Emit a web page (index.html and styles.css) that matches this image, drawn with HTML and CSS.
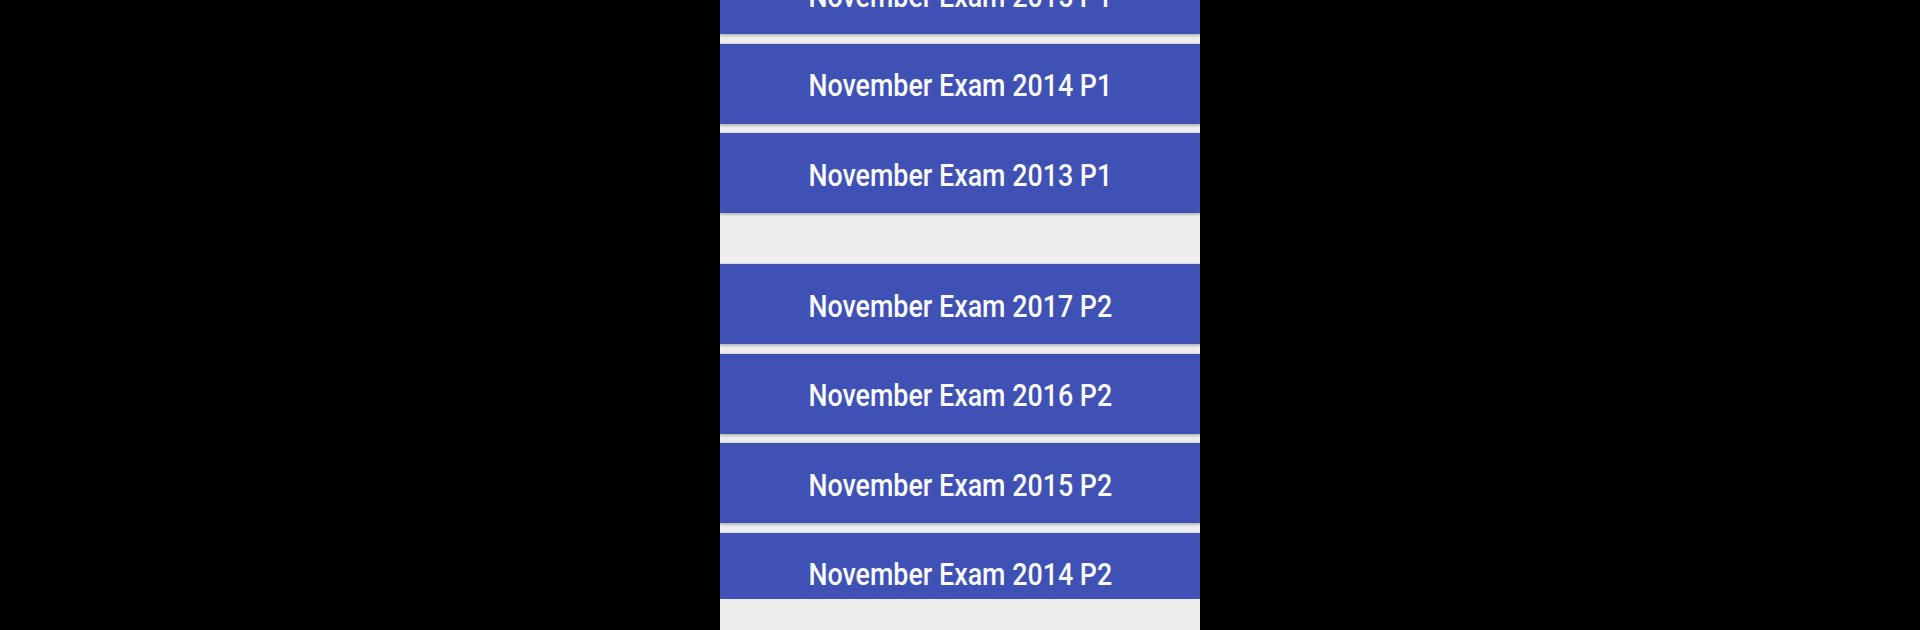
FILE: index.html
```html
<!DOCTYPE html>
<html lang="en">
<head>
    <meta charset="UTF-8">
    <meta name="viewport" content="width=device-width, initial-scale=1.0">
    <title>November Exams</title>
    <link rel="stylesheet" href="styles.css">
</head>
<body>
    <div class="phone-screen">
        <div class="exam-list">
            <div class="paper-group first">
                <button class="exam-button"><span>November Exam 2015 P1</span></button>
                <button class="exam-button"><span>November Exam 2014 P1</span></button>
                <button class="exam-button"><span>November Exam 2013 P1</span></button>
            </div>
            <div class="paper-group">
                <button class="exam-button"><span>November Exam 2017 P2</span></button>
                <button class="exam-button"><span>November Exam 2016 P2</span></button>
                <button class="exam-button"><span>November Exam 2015 P2</span></button>
                <button class="exam-button"><span>November Exam 2014 P2</span></button>
            </div>
        </div>
        <div class="bottom-bar"></div>
    </div>
</body>
</html>
```

FILE: styles.css
```css
:root {
    --primary-color: #3F51B5;
    --background-color: #eeeeee;
}

* {
    margin: 0;
    padding: 0;
    box-sizing: border-box;
}

body {
    background: #000;
    font-family: Roboto, "Noto Sans", sans-serif;
    height: 630px;
    overflow: hidden;
}

.phone-screen {
    width: 480px;
    height: 630px;
    margin: 0 auto;
    background-color: var(--background-color);
    display: flex;
    flex-direction: column;
}

.exam-list {
    height: 599px;
    overflow: hidden;
    display: flex;
    flex-direction: column;
    gap: 51px;
}

.paper-group {
    display: flex;
    flex-direction: column;
    gap: 9.5px;
}

/* list is scrolled a little past the first button */
.paper-group.first {
    margin-top: -46px;
}

.exam-button {
    flex: none;
    height: 80px;
    width: 100%;
    border: none;
    background-color: var(--primary-color);
    color: #fafaff;
    font-family: inherit;
    font-size: 31.5px;
    font-weight: 500;
    display: flex;
    justify-content: center;
    align-items: center;
    padding-top: 4px;
    box-shadow: 0 2px 2px rgba(0, 0, 0, 0.22), 0 -1px 1px rgba(0, 0, 0, 0.08);
    cursor: pointer;
}

.exam-button span {
    display: inline-block;
    white-space: nowrap;
    transform: scaleX(0.852);
}

.bottom-bar {
    flex: 1;
    background-color: var(--background-color);
}
```
